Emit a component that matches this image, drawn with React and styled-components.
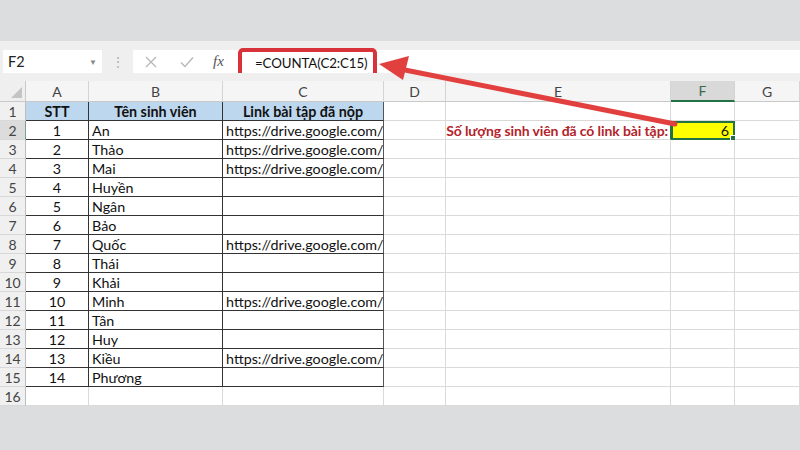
import React from "react"
import styled, { createGlobalStyle } from "styled-components"

const GlobalStyle = createGlobalStyle`
  * { box-sizing: border-box; }
  body {
    margin: 0;
    background: #dcdddf;
    font-family: "Lato", "Open Sans", sans-serif;
  }
`

const Page = styled.div`
  position: relative;
  width: 800px;
  height: 450px;
  overflow: hidden;
  display: flex;
  flex-direction: column;
  background: #dcdddf;
`

const TopBand = styled.div`
  height: 41px;
  background: #dcdddf;
`

const Strip = styled.div`
  height: ${p => p.$h}px;
  background: #efefef;
`

const FormulaBar = styled.div`
  height: 23px;
  display: flex;
  align-items: stretch;
  background: #efefef;
`

const NameBox = styled.div`
  width: 99px;
  margin-left: 3px;
  background: #fff;
  display: flex;
  align-items: center;
  justify-content: space-between;
  padding: 0 5px 0 5px;
  font-size: 14.5px;
  color: #222;
`

const Caret = styled.span`
  font-size: 8px;
  color: #888;
`

const Grip = styled.div`
  width: 31px;
  display: flex;
  align-items: center;
  justify-content: center;
  color: #b5b5b5;
  font-size: 14px;
`

const FormulaInput = styled.div`
  flex: 1;
  background: #fff;
  display: flex;
  align-items: center;
`

const ToolIcon = styled.span`
  width: 36px;
  display: flex;
  align-items: center;
  justify-content: center;
`

const Fx = styled.span`
  font-family: "Liberation Serif", serif;
  font-style: italic;
  font-size: 15px;
  color: #555;
  margin-left: 8px;
  width: 19px;
`

const FormulaHighlight = styled.div`
  align-self: flex-start;
  margin-top: -2px;
  margin-left: 6px;
  width: 139px;
  height: 30px;
  border: 4px solid #d8333a;
  border-radius: 5px;
  background: #fff;
  display: flex;
  align-items: center;
  padding-left: 13px;
  font-size: 13.3px;
  letter-spacing: -0.1px;
  color: #111;
  white-space: nowrap;
`

const Sheet = styled.div`
  display: grid;
  grid-template-columns: 26px 63px 134px 161px 62px 225px 64px 65px;
  grid-template-rows: 21px repeat(16, 19px);
  background: #fff;
`

const Corner = styled.div`
  position: relative;
  background: #efefef;
  border-right: 1px solid #c9c9c9;
  border-bottom: 1px solid #c9c9c9;
  &::after {
    content: "";
    position: absolute;
    right: 3px;
    bottom: 3px;
    width: 0;
    height: 0;
    border-left: 11px solid transparent;
    border-bottom: 11px solid #c4c4c4;
  }
`

const ColHead = styled.div`
  display: flex;
  align-items: center;
  justify-content: center;
  font-size: 14px;
  color: ${p => p.$active ? "#3a6a4f" : "#444"};
  background: ${p => p.$active ? "#d9d9d9" : "#f5f5f5"};
  border-right: 1px solid #d4d4d4;
  border-bottom: ${p => p.$active ? "2px solid #217346" : "1px solid #c9c9c9"};
`

const RowHead = styled.div`
  display: flex;
  align-items: center;
  justify-content: center;
  font-size: 14px;
  color: #444;
  background: ${p => p.$active ? "#dcdcdc" : "#f0f0f0"};
  border-right: 1px solid ${p => p.$active ? "#7da38e" : "#bdbdbd"};
  border-bottom: 1px solid #d8d8d8;
`

const Cell = styled.div`
  position: relative;
  display: flex;
  align-items: center;
  justify-content: ${p => p.$align === "center" ? "center" : p.$align === "right" ? "flex-end" : "flex-start"};
  padding: 0 3px;
  overflow: hidden;
  white-space: nowrap;
  font-size: 14.3px;
  font-weight: ${p => p.$bold ? 700 : 400};
  color: ${p => p.$color || "#111"};
  background: ${p => p.$bg || "#fff"};
  border-right: 1px solid ${p => p.$edge || (p.$boxed ? "#333" : "#dadada")};
  border-bottom: 1px solid ${p => p.$boxed ? "#333" : "#dadada"};
`

const LabelCell = styled(Cell)`
  font-size: 14px;
  padding-right: 2px;
  letter-spacing: -0.1px;
`

const SelectedCell = styled(Cell)`
  overflow: visible;
  outline: 2px solid #217346;
  outline-offset: -2px;
  padding-right: 5px;
  &::after {
    content: "";
    position: absolute;
    right: -3px;
    bottom: -3px;
    width: 5px;
    height: 5px;
    background: #217346;
    border: 1px solid #fff;
  }
`

const Callout = styled.svg`
  position: absolute;
  left: 0;
  top: 0;
  pointer-events: none;
`

const Bottom = styled.div`
  flex: 1;
  background: #dcdddf;
`

const students = [
  [1, "An", true],
  [2, "Thảo", true],
  [3, "Mai", true],
  [4, "Huyền", false],
  [5, "Ngân", false],
  [6, "Bảo", false],
  [7, "Quốc", true],
  [8, "Thái", false],
  [9, "Khải", false],
  [10, "Minh", true],
  [11, "Tân", false],
  [12, "Huy", false],
  [13, "Kiều", true],
  [14, "Phương", false],
]

const columns = ["A", "B", "C", "D", "E", "F", "G"]
const LINK = "https://drive.google.com/file/d/1xA"

const XIcon = () => (
  <svg width="14" height="14" viewBox="0 0 14 14">
    <path d="M2 2 L12 12 M12 2 L2 12" stroke="#b8b8b8" strokeWidth="1.4" fill="none" />
  </svg>
)

const CheckIcon = () => (
  <svg width="16" height="14" viewBox="0 0 16 14">
    <path d="M2 7.5 L6 11.5 L14 2.5" stroke="#b8b8b8" strokeWidth="1.4" fill="none" />
  </svg>
)

// columns D to G
const EmptyRest = ({ active }) => (
  <>
    <Cell />
    {active ? (
      <>
        <LabelCell $align="right" $bold $color="#b3242b" $edge="#217346">
          Số lượng sinh viên đã có link bài tập:
        </LabelCell>
        <SelectedCell $align="right" $bg="#ffff00">6</SelectedCell>
      </>
    ) : (
      <>
        <Cell />
        <Cell />
      </>
    )}
    <Cell />
  </>
)

const App = () => {
  return (
    <Page>
      <GlobalStyle />
      <TopBand />
      <Strip $h={9} />
      <FormulaBar>
        <NameBox>
          F2
          <Caret>▼</Caret>
        </NameBox>
        <Grip>⋮</Grip>
        <FormulaInput>
          <ToolIcon><XIcon /></ToolIcon>
          <ToolIcon><CheckIcon /></ToolIcon>
          <Fx>fx</Fx>
          <FormulaHighlight>=COUNTA(C2:C15)</FormulaHighlight>
        </FormulaInput>
      </FormulaBar>
      <Strip $h={8} />
      <Sheet>
        <Corner />
        {columns.map(c => (
          <ColHead key={c} $active={c === "F"}>{c}</ColHead>
        ))}

        <RowHead>1</RowHead>
        <Cell $boxed $bold $align="center" $bg="#bdd7ee">STT</Cell>
        <Cell $boxed $bold $align="center" $bg="#bdd7ee">Tên sinh viên</Cell>
        <Cell $boxed $bold $align="center" $bg="#bdd7ee" $edge="#555">Link bài tập đã nộp</Cell>
        <EmptyRest />

        {students.map(([n, name, hasLink], i) => (
          <React.Fragment key={n}>
            <RowHead $active={i === 0}>{i + 2}</RowHead>
            <Cell $boxed $align="center">{n}</Cell>
            <Cell $boxed>{name}</Cell>
            <Cell $boxed $edge="#555">{hasLink ? LINK : ""}</Cell>
            <EmptyRest active={i === 0} />
          </React.Fragment>
        ))}

        <RowHead>16</RowHead>
        <Cell />
        <Cell />
        <Cell />
        <EmptyRest />
      </Sheet>
      <Bottom />
      <Callout width="800" height="450" viewBox="0 0 800 450">
        <line x1="675" y1="124" x2="400" y2="69" stroke="#e2403f" strokeWidth="5" strokeLinecap="round" />
        <polygon points="379,64 409,56 403,80" fill="#e2403f" />
      </Callout>
    </Page>
  )
}

export default App
